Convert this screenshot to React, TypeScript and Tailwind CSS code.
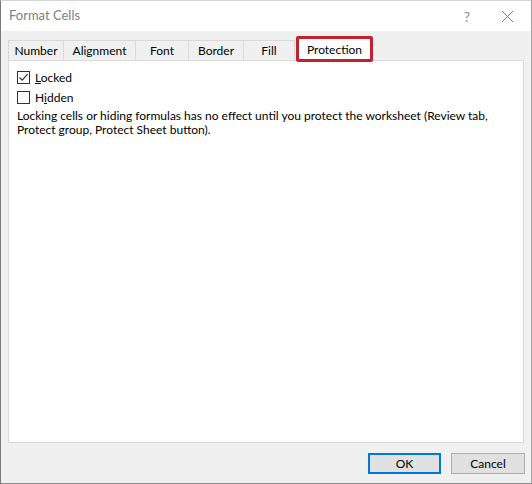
import React from "react";

const font = { fontFamily: 'Lato, "Noto Sans", sans-serif' };

function Checkbox({ checked }: { checked?: boolean }) {
  return (
    <span className="w-[13px] h-[13px] border border-[#333333] bg-white flex items-center justify-center shrink-0">
      {checked && (
        <svg width="11" height="11" viewBox="0 0 11 11">
          <path d="M1.5 5.5 L4.2 8.2 L9.6 2.2" fill="none" stroke="#333" strokeWidth="1.2" />
        </svg>
      )}
    </span>
  );
}

const tabs = [
  { label: "Number", w: "w-[56px]" },
  { label: "Alignment", w: "w-[72px]" },
  { label: "Font", w: "w-[53px]" },
  { label: "Border", w: "w-[55px]" },
  { label: "Fill", w: "w-[51px]" },
];

export default function App() {
  return (
    <div
      className="w-[532px] h-[484px] flex flex-col border-l border-l-[#7a7a7a] border-r border-r-[#a0a0a0] border-t border-t-[#d4d4d4] border-b border-b-[#8a8a8a] text-black text-[12px]"
      style={font}
    >
      {/* Title bar */}
      <div className="h-[30px] bg-white flex items-center shrink-0">
        <span className="pl-[8px] text-[13px] text-[#7f7f7f]">Format Cells</span>
        <span className="ml-auto mr-[31px] text-[14px] text-[#8a8a8a]">?</span>
        <svg width="13" height="13" viewBox="0 0 13 13" className="mr-[17px]">
          <path d="M1 1 L12 12 M12 1 L1 12" stroke="#7a7a7a" strokeWidth="1" />
        </svg>
      </div>

      {/* Body */}
      <div className="flex-1 bg-[#f0f0f0] flex flex-col px-[7px] pb-[8px]">
        <div className="h-[29px] flex items-end">
          {tabs.map((t, i) => (
            <div
              key={t.label}
              className={`${t.w} h-[20px] pt-[1px] border-t border-r border-[#d9d9d9] ${i === 0 ? "border-l" : ""} bg-[#f0f0f0] flex items-center justify-center`}
            >
              {t.label}
            </div>
          ))}
          <div className="relative w-[75px] h-[23px] ml-[2px] -mb-[1px] bg-white flex items-center justify-center z-10">
            Protection
            <span className="absolute -left-[1px] -top-[2px] -right-[1px] -bottom-[1px] border-[3px] border-[#c4212d] rounded-[2px]" />
          </div>
        </div>

        <div className="h-[383px] bg-white border border-[#d9d9d9] px-[8px] pt-[10px]">
          <label className="flex items-center gap-[5px] h-[13px]">
            <Checkbox checked />
            <span className="pt-[1px]">
              <span className="underline">L</span>ocked
            </span>
          </label>
          <label className="flex items-center gap-[5px] h-[13px] mt-[7px]">
            <Checkbox />
            <span className="pt-[1px]">
              H<span className="underline">i</span>dden
            </span>
          </label>
          <p className="mt-[5px] leading-[14px] whitespace-nowrap">
            Locking cells or hiding formulas has no effect until you protect the worksheet (Review tab,
            <br />
            Protect group, Protect Sheet button).
          </p>
        </div>

        <div className="flex justify-end gap-[10px] mt-[10px] -mr-[1px]">
          <button className="w-[73px] h-[21px] bg-[#e1e1e1] border-2 border-[#0078d7] flex items-center justify-center">
            OK
          </button>
          <button className="w-[74px] h-[21px] bg-[#e1e1e1] border border-[#adadad] flex items-center justify-center">
            Cancel
          </button>
        </div>
      </div>
    </div>
  );
}
